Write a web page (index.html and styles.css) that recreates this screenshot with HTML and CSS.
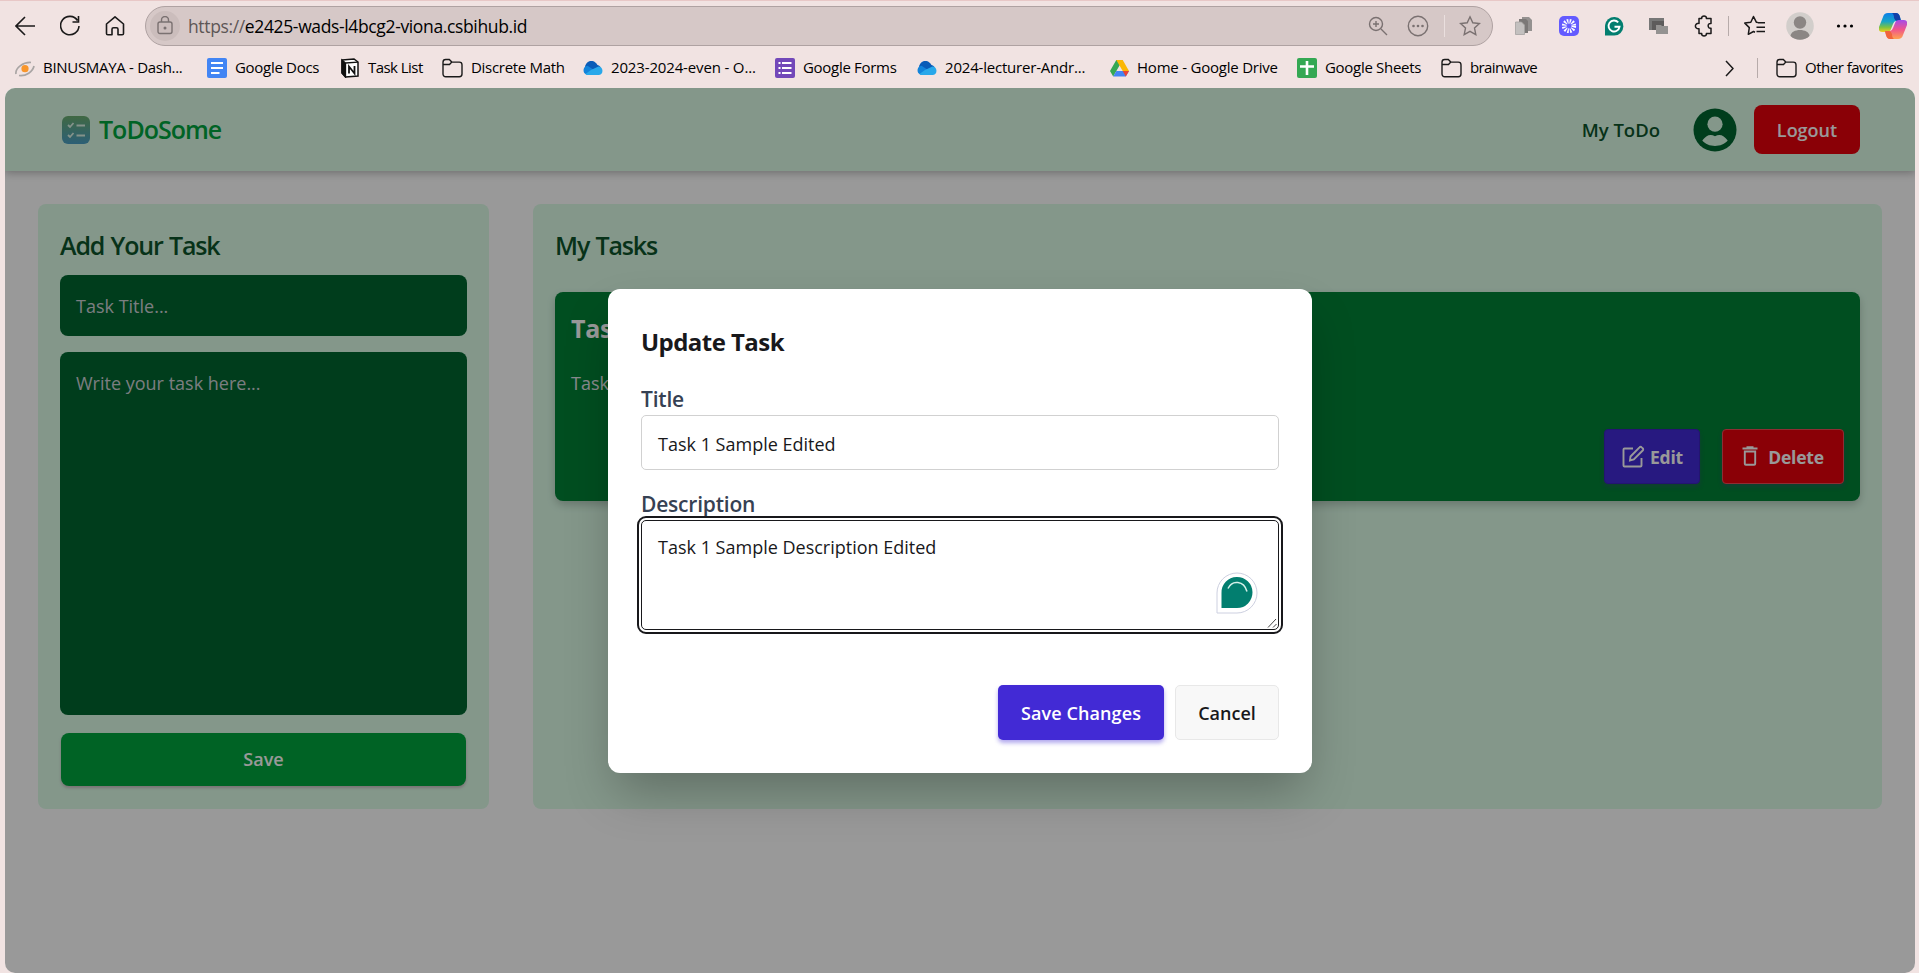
FILE: index.html
```html
<!DOCTYPE html>
<html lang="en">
<head>
<meta charset="utf-8">
<title>ToDoSome</title>
<link rel="stylesheet" href="styles.css">
</head>
<body>
<div class="browser">
  <div class="toolbar">
    <div class="nav">
      <svg width="20" height="22" viewBox="0 0 20 22"><path d="M20 11H1M10 2 1 11l9 9"/></svg>
      <svg width="20" height="22" viewBox="0 0 20 22"><path d="M17.500 5.500A9.200 9.200 0 1 0 19 11M18.500 1v6h-6"/></svg>
      <svg width="20" height="22" viewBox="0 0 20 22"><path d="M1.500 9 10 1.800 18.500 9v9.500q0 1.300-1.300 1.300H13v-5.500q0-1.500-1.500-1.500h-3Q7 12.800 7 14.300v5.500H2.800q-1.300 0-1.300-1.300z" stroke-linejoin="round"/></svg>
    </div>
    <div class="address">
      <span class="lock"><svg width="16" height="19" viewBox="0 0 16 19"><rect x="1" y="6" width="14" height="11.500" rx="2"/><path d="M4.500 6V4a3.500 3.500 0 0 1 7 0v2"/><circle cx="8" cy="12" r=".8"/></svg></span>
      <span class="url"><span class="scheme">https://</span>e2425-wads-l4bcg2-viona.csbihub.id</span>
      <svg class="a-zoom" width="20" height="20" viewBox="0 0 20 20"><circle cx="8" cy="8" r="6.500"/><path d="m13 13 6 6M8 5v6M5 8h6"/></svg>
      <svg class="a-more" width="22" height="22" viewBox="0 0 22 22"><circle cx="11" cy="11" r="9.700"/><g class="dots"><circle cx="6.500" cy="11" r="1.300"/><circle cx="11" cy="11" r="1.300"/><circle cx="15.500" cy="11" r="1.300"/></g></svg>
      <span class="a-rule"></span>
      <svg class="a-star" width="22" height="22" viewBox="0 0 22 22"><path d="m11 1.800 2.800 6 6.600.8-4.900 4.500 1.300 6.500-5.800-3.200-5.800 3.200 1.300-6.500L1.600 8.600l6.600-.8z"/></svg>
    </div>
    <div class="exts">
      <svg width="20" height="20" viewBox="0 0 20 20"><path d="M8 1h7l3 3v11H8z" fill="#949190"/><path d="M5 3h7l2 2v12H5z" fill="#7b7877"/><path d="M1.500 6h6l3 3v9.500h-9z" fill="#c3c0bf" stroke="#a5a2a1" stroke-width=".8"/></svg>
      <svg width="20" height="20" viewBox="0 0 20 20"><rect width="20" height="20" rx="5" fill="#635bff"/><circle cx="10" cy="10" r="4.800" fill="none" stroke="#fff" stroke-width="4.600" stroke-dasharray="1.400 1.113"/></svg>
      <svg width="20" height="20" viewBox="0 0 20 20"><path d="M1 19.500v-10a9.200 9.200 0 1 1 9.200 10z" fill="#027e6f"/><path d="M14.200 6.300A5.500 5.500 0 1 0 15.500 10.800H10.500" stroke="#fff" stroke-width="1.900" fill="none"/></svg>
      <svg width="20" height="20" viewBox="0 0 20 20"><path d="M0 2h15v12H0z" fill="#777"/><path d="M3 5h12v9H3z" fill="#5d5b5b"/><path d="M7 9h5l1 1h6v8H7z" fill="#949291"/></svg>
      <svg class="line" width="20" height="22" viewBox="0 0 20 22"><path d="M5 3.500h2.700c-.5-3.300 5.200-3.300 4.700 0H17v5c-3.800-.8-3.800 5.500 0 4.700v5.300h-4.600c.5 3.300-5.200 3.300-4.700 0H5v-4.800c-4.800.5-4.800-5.800 0-5.300z"/></svg>
    </div>
    <span class="t-rule"></span>
    <svg class="line favs" width="22" height="22" viewBox="0 0 22 22"><path d="M14 7.500 12.300 7.200 9.500 1.500 6.800 7.200l-6 .9 4.500 4.500-1 6.700 5.200-2.800 1.500.7M14 7.800h7M12.500 12.300H21M12.500 16.500H21"/></svg>
    <svg class="profile" width="28" height="28" viewBox="0 0 28 28"><circle cx="14" cy="14" r="13.800" fill="#d2cecb"/><circle cx="14" cy="10.500" r="6.200" fill="#8b8684"/><path d="M4.500 24C5 16 23 16 23.500 24a13.800 13.800 0 0 1-19 0z" fill="#8b8684"/></svg>
    <svg class="dots3" width="18" height="6" viewBox="0 0 18 6"><circle cx="2.500" cy="3" r="1.600"/><circle cx="9" cy="3" r="1.600"/><circle cx="15.500" cy="3" r="1.600"/></svg>
    <svg class="copilot" width="28" height="26" viewBox="0 0 28 26"><defs>
      <linearGradient id="ca" x1="0" y1="0" x2="0" y2="1"><stop offset="0" stop-color="#0d7fe8"/><stop offset=".45" stop-color="#18a5c8"/><stop offset=".75" stop-color="#7cc243"/><stop offset="1" stop-color="#f2cf1d"/></linearGradient>
      <linearGradient id="cb" x1="0" y1="0" x2="0" y2="1"><stop offset="0" stop-color="#a44bea"/><stop offset=".5" stop-color="#f0558c"/><stop offset="1" stop-color="#ffa34f"/></linearGradient></defs>
      <path d="M9 0h8q3 0 4 4l1 4h-5q-2 0-3 3l-2 5q-1 3-4 3H3q-4 0-3-5L4 4q1-4 5-4z" fill="url(#ca)"/><path d="M17 0q3 0 4 4l1 4h-4q-2 0-3-3 0-4-2-5z" fill="#123fa8"/>
      <path d="M19 26h-8q-3 0-4-4l-1-4h5q2 0 3-3l2-5q1-3 4-3h5q4 0 3 5l-4 10q-1 4-5 4z" fill="url(#cb)"/><path d="M11 26q-3 0-4-4l-1-4h4q2 0 3 3 0 4 2 5z" fill="#f0643c"/></svg>
  </div>
  <div class="bookmarks">
    <div class="bm bm1"><svg width="20" height="20" viewBox="0 0 20 20"><path d="M1 16C0 10 8 4 16 4.500M4 17.500c7 1 14-4 15-9.500" fill="none" stroke="#a9a5a4" stroke-width="1.700"/><circle cx="10" cy="10.700" r="3.600" fill="#f9962b"/></svg><span>BINUSMAYA - Dash...</span></div>
    <div class="bm bm2"><svg width="20" height="20" viewBox="0 0 20 20"><rect width="20" height="20" rx="2" fill="#4285f4"/><path d="M4 5h12M4 10h12M4 15h8.500" stroke="#fff" stroke-width="2"/></svg><span>Google Docs</span></div>
    <div class="bm bm3"><svg width="20" height="20" viewBox="0 0 20 20"><path d="m2 2 12-1 4 3v14L5.500 19 2 15z" fill="#fff" stroke="#111" stroke-width="1.500"/><path d="M2 2l3.500 3v14L2 15zM5.500 5l12.500-.8" fill="#111" stroke="#111" stroke-width="1.300"/><path d="M9 15.500v-7l5.500 7v-7.500" stroke="#111" stroke-width="1.800" fill="none"/></svg><span>Task List</span></div>
    <div class="bm bm4"><svg class="folder" width="21" height="20" viewBox="0 0 21 20"><path d="M1 16V4.200A2.700 2.700 0 0 1 3.700 1.500h3.600l2.500 2.600h7.500A2.700 2.700 0 0 1 20 6.800V16a2.700 2.700 0 0 1-2.700 2.700H3.700A2.700 2.700 0 0 1 1 16zM1 6.500h6.500l2.300-2.400"/></svg><span>Discrete Math</span></div>
    <div class="bm bm5"><svg width="21" height="14" viewBox="0 0 21 14"><path d="M3 7a6.500 6.500 0 0 1 12.500-3Q20 5 18 10L4 11z" fill="#0a5cb8"/><path d="M4.500 13.500A4.500 4.500 0 0 1 5.500 4.800L15 11l-3 2.500z" fill="#1283da"/><path d="M3.500 13q6-5 13-7.500a4.300 4.300 0 0 1 .5 8.500H5q-1 0-1.500-1z" fill="#28a8ea"/></svg><span>2023-2024-even - O...</span></div>
    <div class="bm bm6"><svg width="20" height="20" viewBox="0 0 20 20"><rect width="20" height="20" rx="2" fill="#7248b9"/><path d="M7 5h9.500M7 10h9.500M7 15h9.500M3.500 5h2M3.500 10h2M3.500 15h2" stroke="#fff" stroke-width="2.200"/></svg><span>Google Forms</span></div>
    <div class="bm bm7"><svg width="21" height="14" viewBox="0 0 21 14"><path d="M3 7a6.500 6.500 0 0 1 12.500-3Q20 5 18 10L4 11z" fill="#0a5cb8"/><path d="M4.500 13.500A4.500 4.500 0 0 1 5.500 4.800L15 11l-3 2.500z" fill="#1283da"/><path d="M3.500 13q6-5 13-7.500a4.300 4.300 0 0 1 .5 8.500H5q-1 0-1.500-1z" fill="#28a8ea"/></svg><span>2024-lecturer-Andr...</span></div>
    <div class="bm bm8"><svg width="19" height="17" viewBox="0 0 19 17"><path d="M6.300 0h6.400L9.500 5.500 3.200 16.500 0 11z" fill="#34a853"/><path d="M6.300 0h6.400L19 11h-6.300z" fill="#fbb704"/><path d="M3.200 16.500 6.300 11H19l-3.200 5.500z" fill="#4285f4"/><path d="M12.700 11H19l-3.200 5.500z" fill="#ea4335"/></svg><span>Home - Google Drive</span></div>
    <div class="bm bm9"><svg width="20" height="20" viewBox="0 0 20 20"><rect width="20" height="20" rx="2" fill="#34a853"/><path d="M3 8.500h14M10 3v14" stroke="#fff" stroke-width="2.600"/></svg><span>Google Sheets</span></div>
    <div class="bm bm10"><svg class="folder" width="21" height="20" viewBox="0 0 21 20"><path d="M1 16V4.200A2.700 2.700 0 0 1 3.700 1.500h3.600l2.500 2.600h7.500A2.700 2.700 0 0 1 20 6.800V16a2.700 2.700 0 0 1-2.700 2.700H3.700A2.700 2.700 0 0 1 1 16zM1 6.500h6.500l2.300-2.400"/></svg><span>brainwave</span></div>
    <svg class="line chev" width="9" height="17" viewBox="0 0 9 17"><path d="m1 1 7 7.500L1 16"/></svg>
    <span class="b-rule"></span>
    <div class="bm bm11"><svg class="folder" width="21" height="20" viewBox="0 0 21 20"><path d="M1 16V4.200A2.700 2.700 0 0 1 3.700 1.500h3.600l2.500 2.600h7.500A2.700 2.700 0 0 1 20 6.800V16a2.700 2.700 0 0 1-2.700 2.700H3.700A2.700 2.700 0 0 1 1 16zM1 6.500h6.500l2.300-2.400"/></svg><span>Other favorites</span></div>
  </div>
  <div class="page">
    <header class="header">
      <svg class="logo" width="28" height="28" viewBox="0 0 28 28"><defs><linearGradient id="lg" x1="0" y1="0" x2="0" y2="1"><stop offset="0" stop-color="#6bae70"/><stop offset="1" stop-color="#4b9fc4"/></linearGradient></defs><rect width="28" height="28" rx="6" fill="url(#lg)"/><path d="m6 9 2 2 3.500-4M14.500 9.500H23M6 19l2 2 3.500-4M14.500 19.500H23" stroke="#dcf3e6" stroke-width="1.800" fill="none"/></svg>
      <span class="brand">ToDoSome</span>
      <span class="link">My ToDo</span>
      <svg class="avatar" width="44" height="44" viewBox="0 0 44 44"><circle cx="22" cy="22" r="21.500" fill="#016630"/><circle cx="22" cy="16.200" r="7.600" fill="#dcfce7"/><path d="M9.300 32.500C13 27.500 17 25.500 22 28.200c5-2.700 9-.7 12.700 4.300-5.500 7.200-19.900 7.200-25.400 0z" fill="#dcfce7"/></svg>
      <button class="logout"><span>Logout</span></button>
    </header>
    <main class="main">
      <section class="card add">
        <h2>Add Your Task</h2>
        <div class="field title-field"><span>Task Title...</span></div>
        <div class="field body-field"><span>Write your task here...</span></div>
        <button class="save"><span>Save</span></button>
      </section>
      <section class="card tasks">
        <h2>My Tasks</h2>
        <article class="task">
          <h3>Task</h3>
          <p>Task 1</p>
          <div class="actions">
            <button class="edit"><svg width="24" height="24" viewBox="0 0 24 24"><path d="M12 3.500H3.500a1 1 0 0 0-1 1v16a1 1 0 0 0 1 1h16a1 1 0 0 0 1-1V13M9 15.500l.5-4L18.500 2.300a1.500 1.500 0 0 1 2.200 0l1 1a1.500 1.500 0 0 1 0 2.200L12.800 14.500z"/></svg><span>Edit</span></button>
            <button class="delete"><svg width="16" height="21" viewBox="0 0 16 21"><path d="M.5 2.500h15M4.500 1.200h7M2.800 5.500h10.400v12.200a1 1 0 0 1-1 1H3.800a1 1 0 0 1-1-1z"/></svg><span>Delete</span></button>
          </div>
        </article>
      </section>
    </main>
    <div class="backdrop">
      <div class="modal">
        <h3>Update Task</h3>
        <label class="l-title">Title</label>
        <div class="input"><span>Task 1 Sample Edited</span></div>
        <label class="l-desc">Description</label>
        <div class="area"><span>Task 1 Sample Description Edited</span>
          <svg class="helper" width="42" height="42" viewBox="0 0 42 42"><path d="M1 41V21A20 20 0 1 1 21 41z" fill="#fff" stroke="#cdd0e0"/><path d="M5.500 36V21A15.500 15.500 0 1 1 21 36z" fill="#027e6f"/><path d="M12 16.500c4-9 16-8 19 3" fill="none" stroke="#d5f0ea" stroke-width="1.500"/></svg>
          <svg class="grip" width="10" height="10" viewBox="0 0 10 10"><path d="M1 9.500 9 1M6 9.500 9.500 6"/></svg>
        </div>
        <div class="buttons"><button class="primary"><span>Save Changes</span></button><button class="cancel"><span>Cancel</span></button></div>
      </div>
    </div>
  </div>
</div>
</body>
</html>
```
FILE: styles.css
```css
* { box-sizing: border-box; }
body { margin: 0; font-family: "Open Sans", "Noto Sans", sans-serif; font-size: 18px; overflow: hidden; }
h2, h3, p { margin: 0; }
button { border: 0; font: inherit; font-weight: 600; padding: 0; color: #fff; display: flex; align-items: center; justify-content: center; white-space: nowrap; }
svg { flex: none; display: block; }
span, h2, h3, label { white-space: nowrap; }
.browser { width: 1919px; height: 973px; background: #f1e3e2; border-top: 1px solid #e8c8c7; display: flex; flex-direction: column; }
.toolbar { height: 50px; display: flex; align-items: center; padding-bottom: 1px; }
.nav { display: flex; gap: 25px; padding-left: 15px; width: 145px; stroke: #1b1a1a; fill: none; stroke-width: 1.600; }
.line { stroke: #1b1a1a; fill: none; stroke-width: 1.500; stroke-linejoin: round; }
.address { width: 1348px; height: 40px; border: 1px solid #afa2a2; border-radius: 20px; background: #d6c8c7; display: flex; align-items: center; padding-left: 4px; stroke: #7a7171; fill: none; stroke-width: 1.400; }
.lock { width: 30px; height: 30px; border-radius: 50%; background: #cbbdbc; display: flex; align-items: center; justify-content: center; margin-right: 8px; }
.url { font-size: 17.500px; letter-spacing: -.360px; color: #000; flex: 1; }
.scheme { color: #5d5656; }
.a-zoom { margin-right: 19px; }
.a-more { margin-right: 15px; }
.dots { fill: #7a7171; stroke: none; }
.a-rule { width: 1px; height: 22px; background: #eadfde; margin-right: 14px; }
.a-star { margin-right: 11px; }
.exts { display: flex; gap: 25px; padding-left: 21px; align-items: center; }
.t-rule { width: 1px; height: 20px; background: #b7abaa; margin: 0 15px 0 14px; }
.profile { margin-left: 20px; }
.dots3 { margin: 0 25px 0 22px; }
.bookmarks { height: 37px; display: flex; align-items: center; padding-bottom: 3px; font-size: 15px; padding-left: 15px; }
.bm { display: flex; align-items: center; gap: 8px; letter-spacing: -.3px; flex: none; }
.bm span { margin-top: -2px; }
.folder { stroke: #1b1a1a; stroke-width: 1.400; fill: none; }
.bm1 { width: 192px; } .bm2 { width: 133px; } .bm3 { width: 102px; letter-spacing: -.55px; } .bm4 { width: 140px; } .bm5 { width: 193px; letter-spacing: -.15px; } .bm6 { width: 141px; } .bm7 { width: 194px; letter-spacing: -.2px; } .bm8 { width: 187px; letter-spacing: -.22px; } .bm9 { width: 144px; } .bm10 { width: 284px; letter-spacing: -.6px; } .bm11 { letter-spacing: -.5px; }
.b-rule { width: 1px; height: 20px; background: #b7abaa; margin: 0 18px 0 23px; }
.page { margin: 0 4px 0 5px; height: 885px; border-radius: 10px; overflow: hidden; background: #fff; position: relative; }
.header { height: 83px; background: #dcfce7; display: flex; align-items: center; padding: 0 55px 0 57px; box-shadow: 0 2px 8px rgba(0,0,0,.28); }
.brand { margin: -2px 0 0 9px; font-size: 25px; font-weight: 600; color: #00a63e; letter-spacing: -1px; flex: 1; }
.link { font-weight: 600; color: #0d542b; margin-right: 33px; font-size: 18.500px; }
.avatar { margin-right: 17px; }
.logout { width: 106px; height: 49px; border-radius: 8px; background: #e7000b; }
.main { display: flex; gap: 44px; padding: 33px; }
.card { background: #dcfce7; border-radius: 8px; padding: 21px 22px 22px; height: 605px; }
.add { width: 451px; }
.tasks { width: 1349px; }
h2 { font-size: 25px; line-height: 40px; font-weight: 600; color: #0d542b; letter-spacing: -1.150px; word-spacing: 1px; }
.field { background: #016630; border-radius: 8px; color: #ced1d6; padding: 17px 16px; line-height: 28px; }
.title-field { margin-top: 10px; height: 61px; }
.body-field { margin-top: 16px; height: 363px; }
.save { margin: 18px 1px 0; width: 405px; height: 53px; background: #00a63e; border-radius: 8px; box-shadow: 0 2px 3px rgba(190,150,170,.6); padding-bottom: 1px; }
.task { margin-top: 27px; height: 209px; border-radius: 8px; background: #008236; box-shadow: 0 4px 8px rgba(0,0,0,.2); padding: 16px; color: #fff; display: flex; flex-direction: column; }
.task h3 { font-size: 25px; line-height: 40px; letter-spacing: -.3px; }
.task p { margin-top: 21px; line-height: 28px; color: #e5e7eb; }
.actions { display: flex; gap: 22px; justify-content: flex-end; margin-top: auto; margin-bottom: 1px; }
.edit, .delete { height: 55px; border-radius: 4px; gap: 5px; box-shadow: 0 3px 4px rgba(90,50,150,.3); }
.edit { width: 96px; background: #422ad5; border: 1px solid #3b22bd; }
.delete { width: 122px; background: #e7000b; border: 1px solid #ef4b55; gap: 10px; }
.edit span, .delete span { letter-spacing: -.2px; font-weight: 700; font-size: 17.500px; }
.actions svg { stroke: #fff; fill: none; stroke-width: 1.900; }
.backdrop { position: absolute; inset: 0; background: rgba(0,0,0,.4); }
.modal { position: absolute; left: 603px; top: 201px; width: 704px; height: 484px; border-radius: 12px; background: #fff; padding: 33px; box-shadow: 0 25px 50px -8px rgba(0,0,0,.28); display: flex; flex-direction: column; color: #18181b; }
.modal h3 { font-size: 24px; line-height: 40px; letter-spacing: -.550px; }
.modal label { font-size: 21px; line-height: 30px; font-weight: 600; color: #364153; letter-spacing: -.2px; }
.l-title { margin-top: 22px; }
.input { height: 55px; border: 1px solid #d1d1d1; border-radius: 5px; padding: 14px 16px; line-height: 28px; margin-top: 1px; }
.modal .l-desc { margin-top: 19px; margin-bottom: 1px; }
.area { position: relative; height: 110px; border: 1px solid #18181b; outline: 2px solid #18181b; outline-offset: 2px; border-radius: 5px; padding: 12px 16px; line-height: 28px; }
.helper { position: absolute; right: 20px; top: 51px; }
.grip { position: absolute; right: 1px; bottom: 1px; stroke: #444; }
.buttons { margin-top: 55px; display: flex; justify-content: flex-end; gap: 11px; }
.primary { width: 166px; height: 55px; border-radius: 5px; background: #422ad5; box-shadow: 0 3px 4px rgba(66,42,213,.4); letter-spacing: .1px; }
.cancel { width: 104px; height: 55px; border-radius: 5px; background: #f8f8f8; border: 1px solid #e8e8e8; color: #18181b; }
```
